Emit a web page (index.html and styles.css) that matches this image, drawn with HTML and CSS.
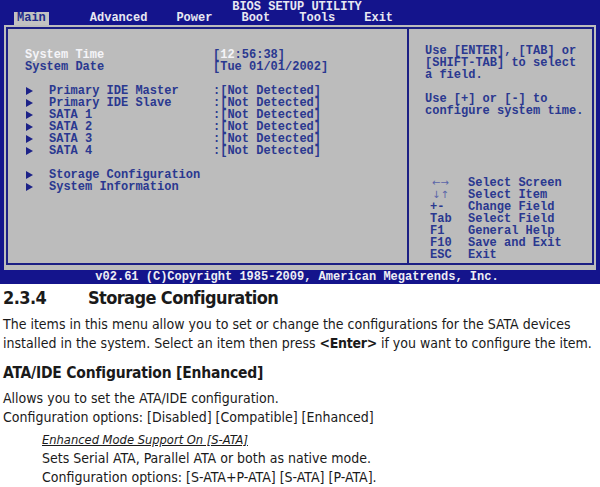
FILE: index.html
```html
<!DOCTYPE html>
<html lang="en">
<head>
    <meta charset="UTF-8">
    <meta name="viewport" content="width=device-width, initial-scale=1.0">
    <title>Storage Configuration</title>
    <link rel="stylesheet" href="styles.css">
</head>
<body>

    <div class="bios">
        <div class="bios-head">
            <div class="bios-title">BIOS SETUP UTILITY</div>
            <div class="bios-menu">
                <span class="tab active">Main</span>
                <span class="tab">Advanced</span>
                <span class="tab">Power</span>
                <span class="tab">Boot</span>
                <span class="tab">Tools</span>
                <span class="tab">Exit</span>
            </div>
        </div>

        <div class="bios-body">
            <div class="frame">
                <div class="panel-left">
                    <div class="row"><span class="label hl">System Time</span><span class="value">[<span class="hl">12</span>:56:38]</span></div>
                    <div class="row"><span class="label">System Date</span><span class="value">[Tue 01/01/2002]</span></div>
                    <div class="spacer"></div>
                    <div class="row"><span class="label"><i class="arrow"></i>Primary IDE Master</span><span class="value">:[Not Detected]</span></div>
                    <div class="row"><span class="label"><i class="arrow"></i>Primary IDE Slave</span><span class="value">:[Not Detected]</span></div>
                    <div class="row"><span class="label"><i class="arrow"></i>SATA 1</span><span class="value">:[Not Detected]</span></div>
                    <div class="row"><span class="label"><i class="arrow"></i>SATA 2</span><span class="value">:[Not Detected]</span></div>
                    <div class="row"><span class="label"><i class="arrow"></i>SATA 3</span><span class="value">:[Not Detected]</span></div>
                    <div class="row"><span class="label"><i class="arrow"></i>SATA 4</span><span class="value">:[Not Detected]</span></div>
                    <div class="spacer"></div>
                    <div class="row"><span class="label wide"><i class="arrow"></i>Storage Configuration</span></div>
                    <div class="row"><span class="label wide"><i class="arrow"></i>System Information</span></div>
                </div>

                <div class="panel-right">
                    <div class="help">
                        Use [ENTER], [TAB] or<br>
                        [SHIFT-TAB] to select<br>
                        a field.<br>
                        <br>
                        Use [+] or [-] to<br>
                        configure system time.
                    </div>
                    <div class="keys">
                        <div class="key"><span class="k arrows">&larr;&rarr;</span><span>Select Screen</span></div>
                        <div class="key"><span class="k arrows">&darr;&uarr;</span><span>Select Item</span></div>
                        <div class="key"><span class="k">+-</span><span>Change Field</span></div>
                        <div class="key"><span class="k">Tab</span><span>Select Field</span></div>
                        <div class="key"><span class="k">F1</span><span>General Help</span></div>
                        <div class="key"><span class="k">F10</span><span>Save and Exit</span></div>
                        <div class="key"><span class="k">ESC</span><span>Exit</span></div>
                    </div>
                </div>
            </div>
        </div>

        <div class="bios-foot">v02.61 (C)Copyright 1985-2009, American Megatrends, Inc.</div>
    </div>

    <div class="doc">
        <h2><span class="num">2.3.4</span>Storage Configuration</h2>
        <p>The items in this menu allow you to set or change the configurations for the SATA devices<br>
        installed in the system. Select an item then press <b>&lt;Enter&gt;</b> if you want to configure the item.</p>

        <h3>ATA/IDE Configuration [Enhanced]</h3>
        <p>Allows you to set the ATA/IDE configuration.<br>
        Configuration options: [Disabled] [Compatible] [Enhanced]</p>

        <div class="sub">
            <div class="sub-title">Enhanced Mode Support On [S-ATA]</div>
            <p>Sets Serial ATA, Parallel ATA or both as native mode.<br>
            Configuration options: [S-ATA+P-ATA] [S-ATA] [P-ATA].</p>
        </div>
    </div>

</body>
</html>
```

FILE: styles.css
```css
body {
    margin: 0;
    background: #fff;
}

/* BIOS screen */
.bios {
    width: 600px;
    background: #14148c;
    padding: 0 4px;
    box-sizing: border-box;
    font-family: "Liberation Mono", "Courier New", monospace;
    font-weight: bold;
    font-size: 12px;
    line-height: 12px;
}
.bios-head {
    height: 25px;
    color: #e8e8f2;
}
.bios-title {
    text-align: center;
    padding: 1px 6px 0 0;
    height: 11px;
}
.bios-menu {
    display: flex;
    gap: 29px;
    padding-left: 10px;
    height: 13px;
    line-height: 13px;
}
.tab.active {
    background: #c2c2c2;
    color: #202a8a;
    padding: 0 3px;
    margin-right: 12px;
}

.bios-body {
    background: #bcbcbc;
    padding: 2px 2px 5px;
}
.frame {
    border: 2px solid #1c1f84;
    height: 234px;
    display: flex;
    color: #2a3890;
}
.panel-left {
    width: 399px;
    padding: 20px 0 0 17px;
    box-sizing: border-box;
}
.row {
    display: flex;
    height: 12px;
}
.label {
    width: 188px;
    flex-shrink: 0;
    white-space: nowrap;
}
.label.wide { width: auto; }
.hl { color: #f4f4f8; }
.spacer { height: 12px; }
.arrow {
    display: inline-block;
    width: 0;
    height: 0;
    border-left: 7px solid #1c2288;
    border-top: 4px solid transparent;
    border-bottom: 4px solid transparent;
    margin: 2px 16px 0 1px;
    vertical-align: top;
}

.panel-right {
    flex: 1;
    border-left: 2px solid #1c1f84;
    display: flex;
    flex-direction: column;
    padding: 16px 0 2px 16px;
}
.keys {
    margin-top: auto;
    padding-left: 5px;
}
.key {
    display: flex;
    height: 12px;
}
.k {
    width: 38px;
    flex-shrink: 0;
}
.k.arrows {
    font-family: "DejaVu Sans", sans-serif;
    font-size: 10px;
    font-weight: normal;
    color: #5a64a8;
    padding-left: 2px;
    width: 36px;
}

.bios-foot {
    height: 14px;
    line-height: 14px;
    color: #eeeef4;
    text-align: center;
    padding-right: 6px;
}

/* manual text */
.doc {
    font-family: "DejaVu Sans Condensed", "DejaVu Sans", sans-serif;
    font-stretch: condensed;
    color: #1a1a1a;
    padding: 0 3px;
    white-space: nowrap;
}
.doc h2 {
    margin: 2px 0 0;
    font-size: 18px;
    letter-spacing: -0.6px;
    line-height: 24px;
}
.num {
    display: inline-block;
    width: 85px;
}
.doc p {
    margin: 5px 0 0;
    font-size: 14px;
    line-height: 19px;
}
.doc p b { letter-spacing: -0.3px; }
.doc h3 {
    margin: 9px 0 0;
    font-size: 15.5px;
    letter-spacing: -0.2px;
    line-height: 22px;
}
.sub {
    padding-left: 39px;
    margin-top: 3px;
}
.sub-title {
    font-style: italic;
    text-decoration: underline;
    font-size: 12.8px;
    line-height: 19px;
}
.sub p { margin-top: 0; }
```
